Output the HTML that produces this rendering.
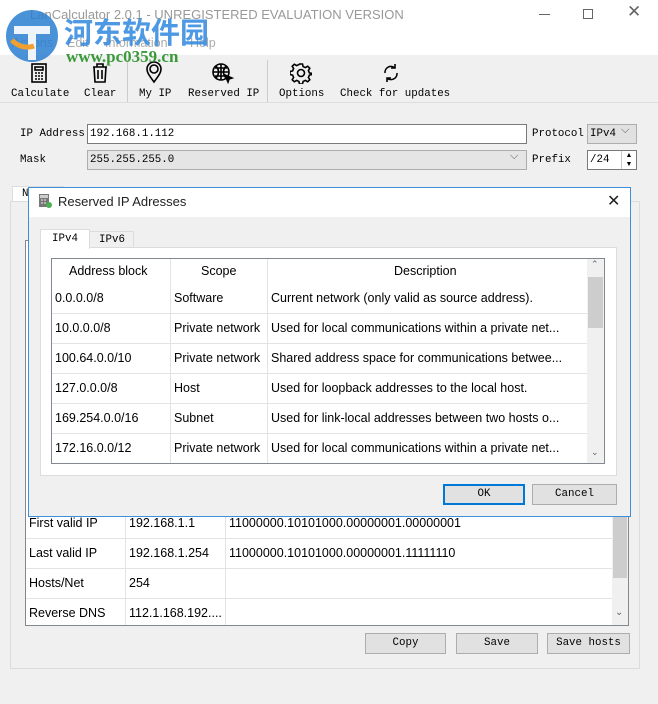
<!DOCTYPE html>
<html><head><meta charset="utf-8"><style>
*{margin:0;padding:0;box-sizing:border-box}
body{width:658px;height:704px;background:#f0f0f0;position:relative;overflow:hidden;font-family:"Liberation Sans","Noto Sans CJK SC",sans-serif;font-size:12.5px;color:#000}
.a{position:absolute}
.m{font-family:"Liberation Mono","Noto Sans CJK SC",monospace;font-size:10.8px}
.btn{position:absolute;background:#e1e1e1;border:1px solid #adadad;text-align:center;font-family:"Liberation Mono",monospace;font-size:10.8px;line-height:18px}
.cell{position:absolute;white-space:nowrap}
.hl{position:absolute;height:1px;background:#e3e3e3}
.vl{position:absolute;width:1px;background:#e3e3e3}
</style></head><body>
<div class="a" style="left:0;top:0;width:658px;height:31px;background:#fff"></div>
<div class="a" style="left:30px;top:7px;color:#999;font-size:13px">LanCalculator 2.0.1 - UNREGISTERED EVALUATION VERSION</div>
<div class="a" style="left:539px;top:14px;width:11px;height:1px;background:#666"></div>
<div class="a" style="left:583px;top:9px;width:10px;height:10px;border:1px solid #666"></div>
<div class="a" style="left:627px;top:2px;color:#666;font-size:17px">✕</div>
<div class="a" style="left:0;top:31px;width:658px;height:24px;background:#fff"></div>
<div class="a" style="left:12px;top:36px;color:#aaa;font-size:12.5px">Actions</div>
<div class="a" style="left:67px;top:36px;color:#aaa">Edit</div>
<div class="a" style="left:105px;top:36px;color:#aaa">Information</div>
<div class="a" style="left:190px;top:36px;color:#aaa">Help</div>
<div class="a" style="left:0;top:55px;width:658px;height:48px;background:#f0f0f0;border-bottom:1px solid #ddd"></div>
<div class="a" style="left:127px;top:60px;width:1px;height:42px;background:#ccc"></div>
<div class="a" style="left:267px;top:60px;width:1px;height:42px;background:#ccc"></div>
<svg class="a" style="left:28px;top:62px" width="22" height="22" viewBox="0 0 22 22" fill="none" stroke="#000" stroke-width="1.6"><rect x="4" y="2" width="14" height="18"/><rect x="7" y="5" width="8" height="3"/><path d="M7 11h2M10 11h2M13 11h2M7 14h2M10 14h2M13 14h2M7 17h2M10 17h2M13 17h2"/></svg>
<svg class="a" style="left:89px;top:62px" width="22" height="22" viewBox="0 0 22 22" fill="none" stroke="#000" stroke-width="1.6"><path d="M4 5h14M8 5V2h6v3M5 5l1 15h10l1-15M9 8v9M13 8v9"/></svg>
<svg class="a" style="left:143px;top:60px" width="22" height="24" viewBox="0 0 22 24" fill="none" stroke="#000" stroke-width="1.6"><path d="M11 22C5 14 4 12 4 9a7 7 0 0114 0c0 3-1 5-7 13z"/><circle cx="11" cy="9" r="4"/></svg>
<svg class="a" style="left:211px;top:62px" width="24" height="22" viewBox="0 0 24 22" fill="none" stroke="#000" stroke-width="1.6"><circle cx="10" cy="10" r="8"/><path d="M2 10h16M10 2v16M5 4q5 6 0 12M15 4q-5 6 0 12M4 6h12M4 14h12"/><path d="M14 13l7 3-3 1-1 3z" fill="#000"/></svg>
<svg class="a" style="left:290px;top:62px" width="22" height="22" viewBox="0 0 22 22" fill="none" stroke="#000" stroke-width="1.6"><circle cx="11" cy="11" r="3.5"/><path d="M9.5 2h3l.6 2.6 2.3 1 2.3-1.4 2.1 2.1-1.4 2.3 1 2.3L22 11.5v-1 2l-2.6.6-1 2.3 1.4 2.3-2.1 2.1-2.3-1.4-2.3 1-.6 2.6h-3l-.6-2.6-2.3-1-2.3 1.4-2.1-2.1 1.4-2.3-1-2.3L0 12.5v-3l2.6-.6 1-2.3-1.4-2.3 2.1-2.1 2.3 1.4 2.3-1z"/></svg>
<svg class="a" style="left:380px;top:61px" width="22" height="24" viewBox="0 0 22 24" fill="none" stroke="#000" stroke-width="1.6"><path d="M5 12a6 6 0 0110-5M17 12a6 6 0 01-10 5"/><path d="M15 3v4h-4M7 21v-4h4"/></svg>
<div class="a m" style="left:11px;top:88px">Calculate</div>
<div class="a m" style="left:84px;top:88px">Clear</div>
<div class="a m" style="left:139px;top:88px">My IP</div>
<div class="a m" style="left:188px;top:88px">Reserved IP</div>
<div class="a m" style="left:279px;top:88px">Options</div>
<div class="a m" style="left:340px;top:88px">Check for updates</div>
<svg class="a" style="left:4px;top:6px" width="60" height="60" viewBox="0 0 60 60"><circle cx="28" cy="30" r="26" fill="#2a7fd0" opacity=".85"/><path d="M10 20h36v8H32v26h-8V28H10z" fill="#fff" opacity=".9"/><path d="M30 40a20 20 0 01-22-6" stroke="#f0a030" stroke-width="5" fill="none"/></svg>
<div class="a" style="left:64px;top:14px;font-size:29px;font-weight:bold;color:#3a8ee0;font-family:'Noto Sans CJK SC',sans-serif;line-height:34px;opacity:.9">河东软件园</div>
<div class="a" style="left:66px;top:47px;font-size:17px;font-weight:bold;color:#3a9a3a;font-family:'Liberation Serif',serif">www.pc0359.cn</div>
<div class="a m" style="left:20px;top:128px">IP Address</div>
<div class="a m" style="left:20px;top:154px">Mask</div>
<div class="a" style="left:87px;top:124px;width:440px;height:20px;background:#fff;border:1px solid #7a7a7a"></div>
<div class="a m" style="left:90px;top:128px">192.168.1.112</div>
<div class="a" style="left:87px;top:150px;width:440px;height:20px;background:#e5e5e5;border:1px solid #adadad"></div>
<div class="a m" style="left:90px;top:154px">255.255.255.0</div>
<div class="a" style="left:510px;top:150px;color:#555;font-size:11px">⌵</div>
<div class="a m" style="left:532px;top:128px">Protocol</div>
<div class="a m" style="left:532px;top:154px">Prefix</div>
<div class="a" style="left:587px;top:124px;width:50px;height:20px;background:#e1e1e1;border:1px solid #adadad"></div>
<div class="a m" style="left:590px;top:128px">IPv4</div>
<div class="a" style="left:621px;top:124px;color:#555;font-size:11px">⌵</div>
<div class="a" style="left:587px;top:150px;width:50px;height:20px;background:#fff;border:1px solid #7a7a7a"></div>
<div class="a m" style="left:590px;top:154px">/24</div>
<div class="a" style="left:621px;top:151px;width:15px;height:18px;border-left:1px solid #ccc;font-size:7px;line-height:9px;text-align:center">▲<br>▼</div>
<div class="a" style="left:12px;top:186px;width:52px;height:16px;background:#fff;border:1px solid #dcdcdc;border-bottom:none"></div>
<div class="a m" style="left:22px;top:188px">N</div>
<div class="a" style="left:10px;top:201px;width:630px;height:468px;background:#f0f0f0;border:1px solid #dcdcdc"></div>
<div class="a" style="left:25px;top:240px;width:604px;height:386px;background:#fff;border:1px solid #828790"></div>
<div class="a" style="left:612px;top:241px;width:16px;height:384px;background:#f0f0f0"></div>
<div class="a" style="left:613px;top:515px;width:14px;height:63px;background:#cdcdcd"></div>
<div class="a" style="left:615px;top:607px;font-size:10px;color:#666">⌄</div>
<div class="hl" style="left:26px;top:538px;width:586px"></div>
<div class="hl" style="left:26px;top:568px;width:586px"></div>
<div class="hl" style="left:26px;top:598px;width:586px"></div>
<div class="vl" style="left:125px;top:508px;height:117px"></div>
<div class="vl" style="left:225px;top:508px;height:117px"></div>
<div class="cell" style="left:29px;top:516px">First valid IP</div>
<div class="cell" style="left:129px;top:516px">192.168.1.1</div>
<div class="cell" style="left:229px;top:516px">11000000.10101000.00000001.00000001</div>
<div class="cell" style="left:29px;top:546px">Last valid IP</div>
<div class="cell" style="left:129px;top:546px">192.168.1.254</div>
<div class="cell" style="left:229px;top:546px">11000000.10101000.00000001.11111110</div>
<div class="cell" style="left:29px;top:576px">Hosts/Net</div>
<div class="cell" style="left:129px;top:576px">254</div>
<div class="cell" style="left:29px;top:606px">Reverse DNS</div>
<div class="cell" style="left:129px;top:606px">112.1.168.192....</div>
<div class="btn" style="left:365px;top:633px;width:81px;height:21px">Copy</div>
<div class="btn" style="left:456px;top:633px;width:82px;height:21px">Save</div>
<div class="btn" style="left:547px;top:633px;width:83px;height:21px">Save hosts</div>
<div class="a" style="left:28px;top:187px;width:603px;height:330px;background:#f0f0f0;border:1px solid #3c8fd8"></div>
<div class="a" style="left:29px;top:188px;width:601px;height:29px;background:#fff"></div>
<svg class="a" style="left:38px;top:194px" width="14" height="14" viewBox="0 0 14 14"><rect x="1" y="0" width="10" height="13" fill="#777"/><rect x="2" y="1" width="8" height="3" fill="#ccc"/><path d="M3 6h2M6 6h2M3 9h2M6 9h2" stroke="#eee"/><circle cx="11" cy="11" r="3" fill="#4caf50"/></svg>
<div class="a" style="left:58px;top:194px;font-size:13px;color:#222">Reserved IP Adresses</div>
<div class="a" style="left:607px;top:191px;font-size:16px;color:#222">✕</div>
<div class="a" style="left:40px;top:247px;width:577px;height:229px;background:#fff;border:1px solid #dcdcdc"></div>
<div class="a" style="left:89px;top:231px;width:45px;height:17px;background:#f0f0f0;border:1px solid #dcdcdc"></div>
<div class="a m" style="left:99px;top:234px">IPv6</div>
<div class="a" style="left:40px;top:229px;width:50px;height:20px;background:#fff;border:1px solid #dcdcdc;border-bottom:none"></div>
<div class="a m" style="left:52px;top:233px">IPv4</div>
<div class="a" style="left:51px;top:258px;width:554px;height:206px;background:#fff;border:1px solid #828790"></div>
<div class="a" style="left:587px;top:259px;width:17px;height:204px;background:#f0f0f0"></div>
<div class="a" style="left:588px;top:277px;width:15px;height:51px;background:#cdcdcd"></div>
<div class="a" style="left:591px;top:259px;font-size:9px;color:#666">⌃</div>
<div class="a" style="left:591px;top:447px;font-size:9px;color:#666">⌄</div>
<div class="vl" style="left:170px;top:259px;height:204px"></div>
<div class="vl" style="left:267px;top:259px;height:204px"></div>
<div class="hl" style="left:52px;top:313px;width:535px"></div>
<div class="hl" style="left:52px;top:343px;width:535px"></div>
<div class="hl" style="left:52px;top:373px;width:535px"></div>
<div class="hl" style="left:52px;top:403px;width:535px"></div>
<div class="hl" style="left:52px;top:433px;width:535px"></div>
<div class="cell" style="left:69px;top:264px">Address block</div>
<div class="cell" style="left:201px;top:264px">Scope</div>
<div class="cell" style="left:394px;top:264px">Description</div>
<div class="cell" style="left:55px;top:291px">0.0.0.0/8</div><div class="cell" style="left:174px;top:291px">Software</div><div class="cell" style="left:271px;top:291px">Current network (only valid as source address).</div>
<div class="cell" style="left:55px;top:321px">10.0.0.0/8</div><div class="cell" style="left:174px;top:321px">Private network</div><div class="cell" style="left:271px;top:321px">Used for local communications within a private net...</div>
<div class="cell" style="left:55px;top:351px">100.64.0.0/10</div><div class="cell" style="left:174px;top:351px">Private network</div><div class="cell" style="left:271px;top:351px">Shared address space for communications betwee...</div>
<div class="cell" style="left:55px;top:381px">127.0.0.0/8</div><div class="cell" style="left:174px;top:381px">Host</div><div class="cell" style="left:271px;top:381px">Used for loopback addresses to the local host.</div>
<div class="cell" style="left:55px;top:411px">169.254.0.0/16</div><div class="cell" style="left:174px;top:411px">Subnet</div><div class="cell" style="left:271px;top:411px">Used for link-local addresses between two hosts o...</div>
<div class="cell" style="left:55px;top:441px">172.16.0.0/12</div><div class="cell" style="left:174px;top:441px">Private network</div><div class="cell" style="left:271px;top:441px">Used for local communications within a private net...</div>
<div class="btn" style="left:443px;top:484px;width:82px;height:21px;border:2px solid #0078d7;line-height:17px">OK</div>
<div class="btn" style="left:532px;top:484px;width:85px;height:21px">Cancel</div>
</body></html>
